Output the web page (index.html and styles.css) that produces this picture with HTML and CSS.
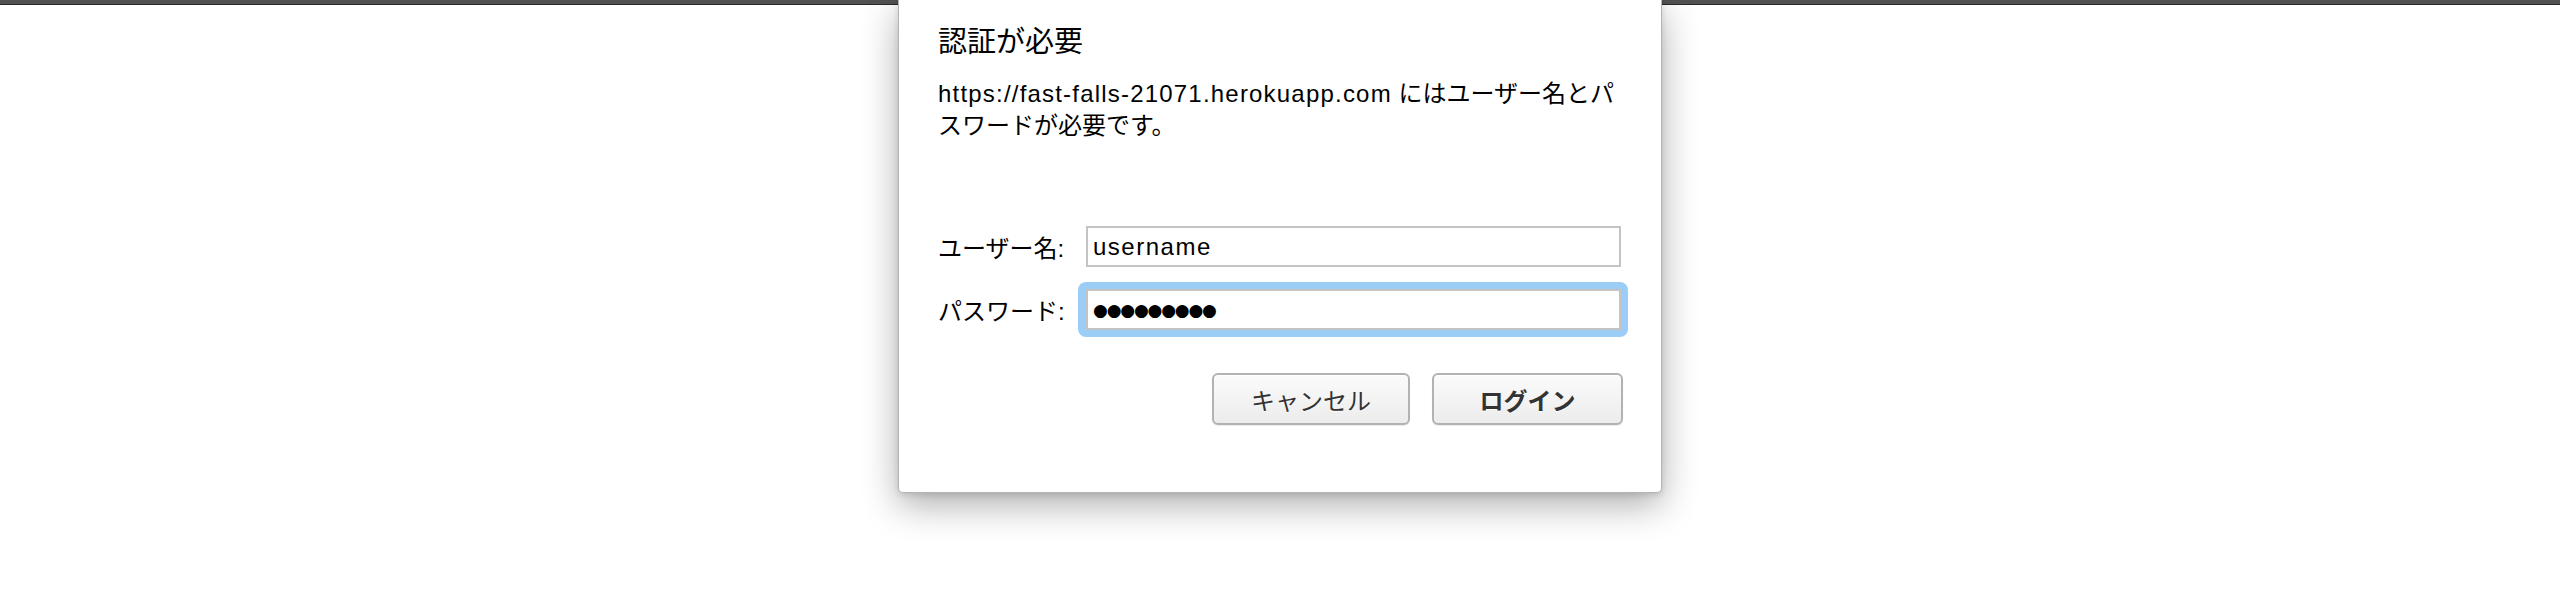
FILE: index.html
```html
<!DOCTYPE html>
<html lang="ja">
<head>
<meta charset="utf-8">
<title>認証が必要</title>
<link rel="stylesheet" href="styles.css">
</head>
<body>
<div class="topbar"></div>
<div class="dialog" role="dialog" aria-labelledby="dlg-title">
  <h1 class="title" id="dlg-title">認証が必要</h1>
  <p class="message"><span class="url">https://fast-falls-21071.herokuapp.com</span> にはユーザー名とパスワードが必要です。</p>
  <form class="form">
    <label class="label" for="user">ユーザー名:</label>
    <input class="field" id="user" type="text" value="username">
    <label class="label" for="pass">パスワード:</label>
    <div class="focus-ring">
      <input class="field dots" id="pass" type="text" value="●●●●●●●●●">
    </div>
  </form>
  <div class="buttons">
    <button class="btn btn-cancel" type="button">キャンセル</button>
    <button class="btn btn-login" type="button">ログイン</button>
  </div>
</div>
</body>
</html>
```

FILE: styles.css
```css
html, body {
  margin: 0;
  padding: 0;
  background: #ffffff;
}

body {
  font-family: "Liberation Sans", "Noto Sans CJK JP", sans-serif;
  color: #000;
}

.topbar {
  height: 4px;
  background: #525252;
  border-bottom: 1px solid #2a2a2a;
}

.dialog {
  position: absolute;
  top: 0;
  left: 898px;
  width: 764px;
  box-sizing: border-box;
  background: #fff;
  border: 1px solid #b4b4b4;
  border-top: none;
  border-radius: 0 0 5px 5px;
  padding: 24px 39px 67px 39px;
  box-shadow: 0 12px 36px rgba(0, 0, 0, 0.32), 0 2px 6px rgba(0, 0, 0, 0.12);
}

.title {
  margin: 0;
  font-size: 29px;
  line-height: 36px;
  font-weight: normal;
}

.message {
  margin: 18px 0 0 0;
  font-size: 24px;
  line-height: 32px;
}

.url {
  letter-spacing: 1.2px;
}

.form {
  margin: 84px 0 0 0;
  display: grid;
  grid-template-columns: 148px 1fr;
  row-gap: 22px;
  align-items: center;
}

.label {
  font-size: 24px;
  line-height: 32px;
  padding-top: 4px;
}

.field {
  display: block;
  box-sizing: border-box;
  width: 535px;
  height: 41px;
  margin: 0;
  border: 2px solid #c4c4c4;
  border-radius: 0;
  padding: 0 5px;
  font-family: "Liberation Sans", sans-serif;
  font-size: 24px;
  letter-spacing: 1.5px;
  color: #000;
  background: #fff;
  outline: none;
}

.focus-ring {
  margin: -7px 0 -7px -8px;
  width: 535px;
  padding: 7px 7px 7px 8px;
  background: #9bcdf7;
  border-radius: 8px;
}

.dots {
  font-family: "DejaVu Sans", sans-serif;
  font-size: 17px;
  letter-spacing: -1.2px;
}

.buttons {
  margin-top: 43px;
  display: flex;
  justify-content: flex-end;
  gap: 22px;
}

.btn {
  box-sizing: border-box;
  height: 52px;
  margin: 0;
  border: 2px solid #b2b2b2;
  border-radius: 6px;
  background: linear-gradient(#fbfbfb, #ececec);
  box-shadow: inset 0 1px 0 #ffffff, 0 1px 1px rgba(0, 0, 0, 0.08);
  font-family: "Liberation Sans", "Noto Sans CJK JP", sans-serif;
  font-size: 24px;
  color: #333;
  text-shadow: 0 1px 0 rgba(255, 255, 255, 0.8);
  padding: 0;
}

.btn-cancel {
  width: 198px;
}

.btn-login {
  width: 191px;
  font-weight: bold;
  margin-right: -1px;
}
```
